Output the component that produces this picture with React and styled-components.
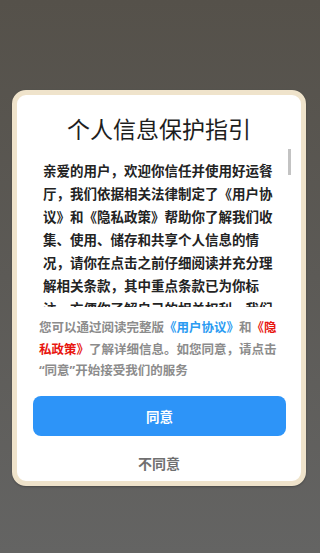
import React from 'react';
import styled, { createGlobalStyle } from 'styled-components';

const GlobalStyle = createGlobalStyle`
  html, body {
    margin: 0;
    padding: 0;
  }
  body {
    font-family: "Noto Sans CJK SC", "Noto Sans", sans-serif;
  }
`;

const Page = styled.div`
  width: 320px;
  height: 553px;
  box-sizing: border-box;
  padding: 90px 14px 0 12px;
  background: linear-gradient(180deg, #55514a 0%, #5c5a56 50%, #646463 100%);
  overflow: hidden;
`;

const Card = styled.div`
  width: 294px;
  box-sizing: border-box;
  border: 5px solid #efe3cb;
  border-radius: 14px;
  background: #ffffff;
  display: flex;
  flex-direction: column;
  box-shadow: 0 1px 2px rgba(0, 0, 0, 0.25);
`;

const Title = styled.h1`
  margin: 18px 0 6px;
  font-size: 23px;
  line-height: 30px;
  font-weight: 400;
  color: #1e1e1e;
  text-align: center;
`;

// scroll box + its thumb drawn on top (the browser hides native scrollbars)
const ScrollWrap = styled.div`
  position: relative;
  margin-right: 10px;
`;

const ScrollArea = styled.div`
  height: 158px;
  box-sizing: border-box;
  padding: 9.5px 0 0 26px;
  overflow-y: auto;
  scrollbar-width: none;
  font-size: 13.5px;
  line-height: 23px;
  font-weight: 700;
  color: #232323;

  &::-webkit-scrollbar {
    display: none;
  }
`;

const ScrollThumb = styled.div`
  position: absolute;
  top: 0;
  right: 0;
  width: 3px;
  height: 26px;
  background: #c3c3c3;
`;

const Paragraph = styled.p`
  margin: 0;
  width: 230px;
`;

const Notice = styled.p`
  margin: 9px 0 0 22px;
  width: 239px;
  font-size: 12.5px;
  line-height: 21.5px;
  font-weight: 700;
  color: #8c8c8c;
`;

const DocLink = styled.span`
  color: ${(p) => (p.$red ? '#e8160f' : '#2b9bf2')};
`;

// narrow western quote marks, as in the reference
const Quote = styled.span`
  font-family: "Noto Sans", sans-serif;
`;

const AgreeButton = styled.button`
  margin: 14px 15px 0 16px;
  height: 40px;
  border: none;
  border-radius: 8px;
  background: #2d94f8;
  color: #ffffff;
  font-family: inherit;
  font-size: 13.5px;
  font-weight: 700;
  cursor: pointer;
`;

const DeclineButton = styled.button`
  margin: 17px 0 8px;
  height: 20px;
  padding: 0;
  border: none;
  background: none;
  color: #707070;
  font-family: inherit;
  font-size: 14px;
  line-height: 20px;
  font-weight: 700;
  cursor: pointer;
`;

const paragraphs = [
  '亲爱的用户，欢迎你信任并使用好运餐厅，我们依据相关法律制定了《用户协议》和《隐私政策》帮助你了解我们收集、使用、储存和共享个人信息的情况，请你在点击之前仔细阅读并充分理解相关条款，其中重点条款已为你标注，方便你了解自己的相关权利。我们将通过《隐私政策》向你说明：',
  '1. 为了向你提供游戏服务，我们会收集、使用你的必要信息，包括设备信息、网络信息及游戏日志信息；',
  '2. 基于你的明示授权，我们可能会获取你的存储权限、设备权限等，你有权拒绝或取消授权；',
  '3. 我们会采取业界领先的安全措施保护你的信息安全；',
  '4. 未经你同意，我们不会从第三方处获取、共享或向其提供你的信息；',
  '5. 你可以查询、更正、删除你的个人信息，我们也提供账户注销的渠道。',
  '如你是未满十四周岁的未成年人，请在监护人的陪同下阅读本指引，并在取得监护人同意后使用我们的服务。',
];

const App = () => {
  return (
    <Page>
      <GlobalStyle />
      <Card>
        <Title>个人信息保护指引</Title>
        <ScrollWrap>
          <ScrollArea>
            {paragraphs.map((text, index) => (
              <Paragraph key={index}>{text}</Paragraph>
            ))}
          </ScrollArea>
          <ScrollThumb />
        </ScrollWrap>
        <Notice>
          您可以通过阅读完整版<DocLink>《用户协议》</DocLink>和<DocLink $red>《隐私政策》</DocLink>了解详细信息。如您同意，请点击{'\u200B'}<Quote>“</Quote>同意<Quote>”</Quote>开始接受我们的服务
        </Notice>
        <AgreeButton>同意</AgreeButton>
        <DeclineButton>不同意</DeclineButton>
      </Card>
    </Page>
  );
};

export default App;
